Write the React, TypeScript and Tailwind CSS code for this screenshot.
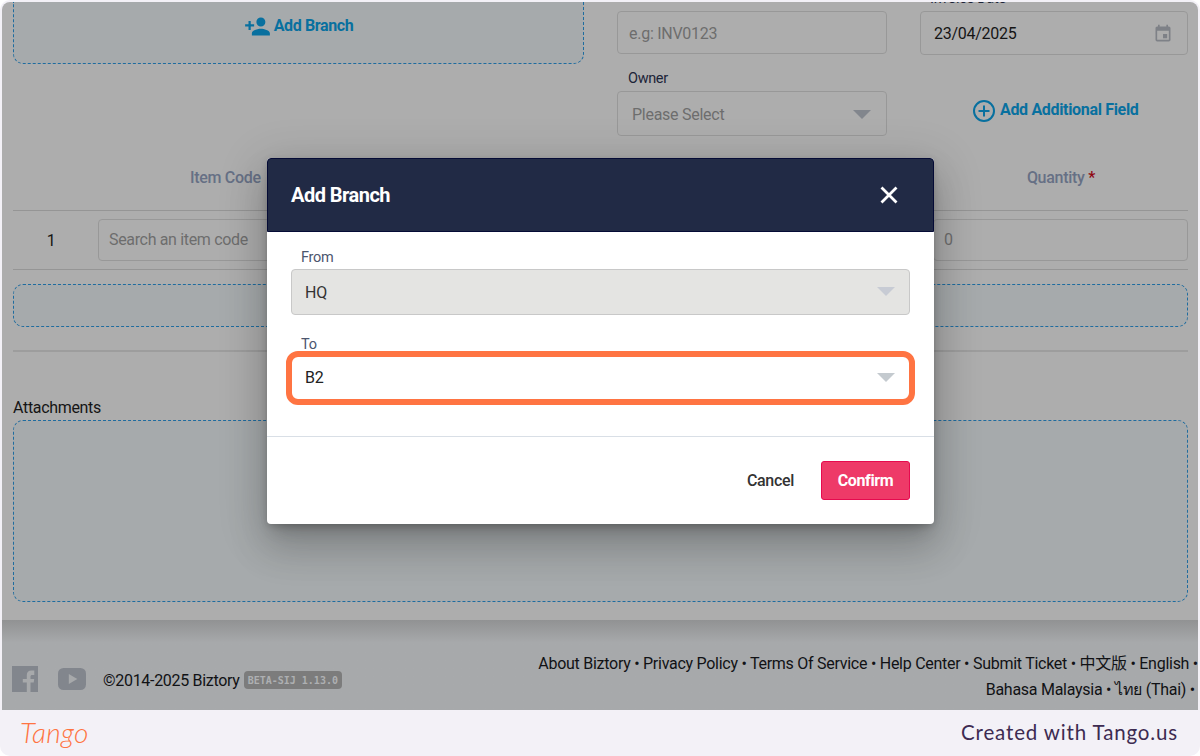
import type { ReactNode } from "react";
import { MdEvent, MdPersonAddAlt1 } from "react-icons/md";

const firstRowLinks = [
  "About Biztory",
  "Privacy Policy",
  "Terms Of Service",
  "Help Center",
  "Submit Ticket",
  "中文版",
  "English",
];

const secondRowLinks = ["Bahasa Malaysia", "ไทย (Thai)"];

function Caret({ className }: { className: string }) {
  return (
    <svg viewBox="0 0 18 9" className={`h-[9px] w-[18px] shrink-0 ${className}`} fill="currentColor">
      <path d="M0 0h18L9 9z" />
    </svg>
  );
}

function Field({ className, children }: { className: string; children: ReactNode }) {
  return (
    <div className={`flex items-center rounded-[4px] border border-[#989898] ${className}`}>
      {children}
    </div>
  );
}

function TopSection() {
  return (
    <div className="flex h-[134px] gap-[33px]">
      <div className="flex h-[62px] w-[571px] shrink-0 justify-center rounded-b-[10px] border border-t-0 border-dashed border-[#1f6c9f] bg-[#a6aaac] pt-[10px] text-[#08709f]">
        <div className="flex h-7 items-center">
          <MdPersonAddAlt1 className="mr-[3px] size-[27px] -scale-x-100" />
          <span className="pb-[1px] text-[16px] font-bold tracking-[-0.38px]">Add Branch</span>
        </div>
      </div>

      <div className="flex w-[270px] shrink-0 flex-col pt-[9px]">
        <Field className="h-[43px] px-[11px] pt-[2px] text-[#6d6d6d]">e.g: INV0123</Field>
        <div className="flex h-[37px] items-center pt-[12px] pl-[11px] text-[14.5px] tracking-[-0.35px] text-[#1c2438]">
          Owner
        </div>
        <Field className="h-[45px] justify-between pt-[2px] pr-[15px] pl-[14px] text-[#6d6d6d]">
          Please Select
          <Caret className="text-[#82868d]" />
        </Field>
      </div>

      <div className="flex w-[268px] shrink-0 flex-col">
        <div className="flex h-[9px] items-end overflow-hidden pl-[10px] text-[14.5px] leading-[17px] tracking-[-0.3px] text-[#1c2438]">
          <span className="pb-[4px]">Invoice Date</span>
        </div>
        <Field className="h-[44px] justify-between pt-[1px] pr-[14px] pl-[13px] text-[#151515]">
          23/04/2025
          <MdEvent className="size-5 text-[#7e8187]" />
        </Field>
        <div className="mt-[42px] flex h-7 items-center pl-[52px] text-[#08709f]">
          <svg viewBox="0 0 24 24" className="size-6 shrink-0" fill="none" stroke="currentColor" strokeWidth="2">
            <circle cx="12" cy="12" r="10" />
            <path d="M12 6.5v11M6.5 12h11" />
          </svg>
          <span className="ml-1 pb-[3px] text-[16px] font-bold tracking-[-0.33px]">Add Additional Field</span>
        </div>
      </div>
    </div>
  );
}

function ItemsTable() {
  return (
    <div>
      <div className="flex h-[75px] items-center justify-between border-b border-[#959595] pt-[9px] pr-[93px] pl-[177px] font-medium tracking-[-0.3px] text-[#667085]">
        <span>Item Code</span>
        <span>
          Quantity <span className="text-[#8f0612]">*</span>
        </span>
      </div>
      <div className="flex h-[59px] items-center border-b border-[#959595]">
        <div className="w-[85px] shrink-0 pt-[1px] pr-[9px] text-center text-[#151515]">1</div>
        <Field className="h-[42px] w-[400px] px-[10px] tracking-[-0.34px] text-[#6d6d6d]">Search an item code</Field>
        <Field className="ml-auto h-[42px] w-[255px] px-[10px] text-[#6d6d6d]">0</Field>
      </div>
      <div className="mt-[14px] h-[43px] rounded-[10px] border border-dashed border-[#1f6c9f] bg-[#a6aaac]" />
      <div className="mt-[23px] h-[2px] bg-[#9d9d9d]" />
    </div>
  );
}

function AppFooter() {
  return (
    <div className="flex grow justify-between bg-gradient-to-b from-[#919293] via-[#a7a9ab] via-25% to-[#a7a9ab] pl-[10px] text-[#111215]">
      <div className="flex items-start pt-[45px]">
        <svg viewBox="0 0 26 26" className="mt-[1px] size-[26px]" fill="#82868d">
          <path d="M0 0h26v26h-7.500V16.500h3.200l.5-3.500h-3.700v-2.200c0-1.200.5-1.800 1.800-1.800h2V4.500h-2.800c-3.200 0-4.700 1.800-4.700 4.600V13h-4v3.500h4V26H0z" />
        </svg>
        <svg viewBox="0 0 28 22" className="mt-[3px] ml-[20px] h-[22px] w-[28px]">
          <rect width="28" height="22" rx="5.500" fill="#82868d" />
          <path d="M10.800 6v10l8.500-5z" fill="#a7a9ab" />
        </svg>
        <span className="ml-[17px] leading-[31px] tracking-[-0.3px]">©2014-2025 Biztory</span>
        <span className="mt-[6px] ml-1 h-[18px] rounded-[4px] bg-[#7c7c7c] px-[4px] font-['DejaVu_Sans_Mono',monospace] text-[10px] leading-[19px] font-bold tracking-normal text-[#aeb0b2]">
          BETA-SIJ 1.13.0
        </span>
      </div>
      <div className="pt-[30px] text-right leading-[27px] whitespace-nowrap">
        <div className="tracking-[-0.27px]">
          {firstRowLinks.map((link) => (
            <span key={link}>{link} • </span>
          ))}
        </div>
        <div className="-mt-px pr-[3px]">
          {secondRowLinks.map((link) => (
            <span key={link}>{link} • </span>
          ))}
        </div>
      </div>
    </div>
  );
}

function AddBranchModal() {
  return (
    <div className="absolute top-[156px] left-[265px] flex h-[366px] w-[667px] flex-col rounded-[4px] bg-white shadow-[0_11px_15px_-7px_rgba(0,0,0,0.2),0_24px_38px_3px_rgba(0,0,0,0.14),0_9px_46px_8px_rgba(0,0,0,0.12),0_2px_6px_rgba(0,0,0,0.15)]">
      <div className="flex h-[74px] items-center justify-between rounded-t-[4px] border border-[#050b35] bg-[#212a45] pr-[35px] pl-[23px] text-white">
        <h2 className="text-[20px] font-bold tracking-[-0.52px]">Add Branch</h2>
        <svg viewBox="0 0 18 18" className="size-[18px]" fill="none" stroke="currentColor" strokeWidth="2.800">
          <path d="M1.500 1.500l15 15M16.500 1.500l-15 15" />
        </svg>
      </div>

      <div className="flex h-[204px] flex-col px-[24px] pt-[17px]">
        <label className="pl-[10px] text-[14.5px] leading-[18px] text-[#4c566e]">From</label>
        <div className="mt-[2px] flex h-[46px] items-center justify-between rounded-[4px] border border-[#c8c8c8] bg-[#e4e4e2] pt-[1px] pr-[14px] pl-[13px] text-[#333]">
          HQ
          <Caret className="-mt-[2px] text-[#c7cbd4]" />
        </div>
        <label className="mt-[22px] -mb-[2px] pl-[10px] text-[14.5px] leading-[16px] text-[#4c566e]">To</label>
        <div className="-mx-[5px] flex h-[54px] shrink-0 items-center justify-between rounded-[12px] border-[6px] border-[#ff7442] bg-white pr-[14px] pl-[13px] text-[#222]">
          B2
          <Caret className="-mt-[2px] text-[#c4cacf]" />
        </div>
      </div>

      <div className="flex grow items-center justify-end border-t border-[#d9dfe6] pr-[24px]">
        <button className="mr-[27px] font-medium tracking-[-0.32px] text-[#333]">Cancel</button>
        <button className="h-[39px] w-[89px] rounded-[3px] border border-[#e60a4f] bg-[#ee3a68] font-bold tracking-[-0.35px] text-white">
          Confirm
        </button>
      </div>
    </div>
  );
}

export default function App() {
  return (
    <div className="h-[756px] w-[1200px] bg-white">
      <div className="flex h-full flex-col overflow-hidden rounded-[10px] bg-[#f3f1f7] px-[2px] pt-[2px]">
        <div className="relative flex h-[708px] shrink-0 flex-col overflow-hidden rounded-t-[8px] bg-[#adadad] font-[Roboto,'Noto_Sans_CJK_SC',sans-serif] text-[16px] leading-[20px] tracking-[-0.27px]">
          <div className="h-[618px] shrink-0 pr-[10px] pl-[11px]">
            <TopSection />
            <ItemsTable />
            <div className="mt-[46px] leading-[20px] tracking-[-0.33px] text-[#151515]">Attachments</div>
            <div className="mt-[2px] h-[182px] rounded-[10px] border border-dashed border-[#1f6c9f] bg-[#a6aaac]" />
          </div>
          <AppFooter />
          <AddBranchModal />
        </div>

        <div className="flex grow items-center justify-between pr-[20px] pb-[2px] pl-[18px] font-[Lato,sans-serif]">
          <span className="text-[28px] leading-none font-light tracking-[0.3px] text-[#ff7442] italic">Tango</span>
          <span className="text-[20.5px] tracking-[0.85px] text-[#3d2b51]">Created with Tango.us</span>
        </div>
      </div>
    </div>
  );
}
